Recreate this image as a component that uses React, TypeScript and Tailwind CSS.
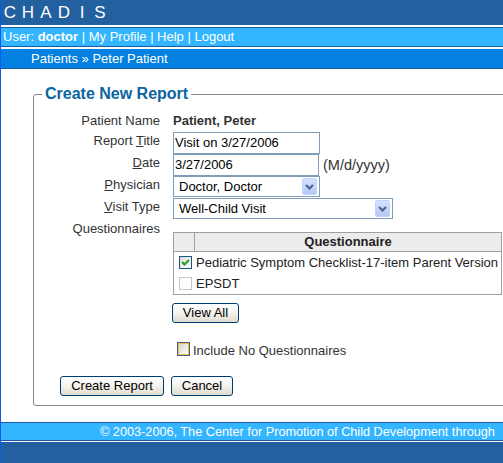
import React from "react";

function XpButton({ children, w }: { children: React.ReactNode; w: string }) {
  return (
    <div
      className={`${w} h-[20px] flex items-center justify-center rounded-[3px] border border-[#003c74] bg-linear-to-b from-[#ffffff] via-[#f4f3ee] to-[#dedbce] text-[13px] leading-4 text-black`}
    >
      {children}
    </div>
  );
}

function DropBtn() {
  return (
    <div className="mr-[2px] h-[17px] w-[15px] flex items-center justify-center rounded-[2px] border border-[#c3d3fd] bg-linear-to-b from-[#d5e2fe] to-[#b4c9f7]">
      <svg width="9" height="6" viewBox="0 0 9 6">
        <path d="M1 1 L4.5 4.5 L8 1" fill="none" stroke="#4d6185" strokeWidth="2" />
      </svg>
    </div>
  );
}

export default function App() {
  return (
    <div className="w-[503px] h-[463px] overflow-hidden bg-white border-l border-[#0b5ce6] flex flex-col font-['Liberation_Sans',Arial,sans-serif] text-[13px] leading-4 text-[#333]">
      {/* header */}
      <div className="h-[25px] shrink-0 bg-[#2360a0] flex items-center text-white text-[17px] font-normal">
        {["C", "H", "A", "D", "I", "S"].map((c) => (
          <span key={c} className="w-[18px] text-center">
            {c}
          </span>
        ))}
      </div>
      <div className="h-[2px] shrink-0" />
      <div className="h-[20px] shrink-0 bg-[#33b6ff] border-y border-[#1f5a9c] flex items-center pl-[2px] text-white whitespace-nowrap">
        User:&nbsp;<b>doctor</b>&nbsp;|&nbsp;My Profile&nbsp;|&nbsp;Help&nbsp;|&nbsp;Logout
      </div>
      <div className="h-[2px] shrink-0" />
      <div className="h-[20px] shrink-0 bg-[#0481e0] border-b border-[#1f5a9c] flex items-center pl-[30px] text-white whitespace-nowrap">
        Patients » Peter Patient
      </div>

      {/* content */}
      <fieldset className="mt-[16px] ml-[32px] w-[500px] shrink-0 border border-[#878787] rounded-[3px] pl-[8px] pt-[9px] pb-[9px]">
        <legend className="px-[3px] text-[16px] leading-[18px] font-bold text-[#0a64a0]">Create New Report</legend>
        <div className="grid grid-cols-[118px_auto] gap-x-[13px]">
          <div className="h-[20px] text-right pt-[1px]">Patient Name</div>
          <div className="h-[20px] font-bold pt-[1px]">Patient, Peter</div>

          <div className="h-[22px] text-right pt-[1px]">
            Report <span className="underline">T</span>itle
          </div>
          <div className="h-[22px]">
            <div className="w-[147px] h-[22px] border border-[#7f9db9] flex items-center pl-[1px] text-black">Visit on 3/27/2006</div>
          </div>

          <div className="h-[22px] text-right pt-[1px]">
            <span className="underline">D</span>ate
          </div>
          <div className="h-[22px] flex items-center">
            <div className="w-[146px] h-[22px] border border-[#7f9db9] flex items-center pl-[1px] text-black">3/27/2006</div>
            <span className="ml-[4px] text-[14.5px]">(M/d/yyyy)</span>
          </div>

          <div className="h-[22px] text-right pt-[1px]">
            <span className="underline">P</span>hysician
          </div>
          <div className="h-[22px]">
            <div className="w-[147px] h-[21px] border border-[#7f9db9] flex items-center pl-[5px] text-black">
              <span className="flex-1">Doctor, Doctor</span>
              <DropBtn />
            </div>
          </div>

          <div className="h-[22px] text-right pt-[1px]">
            <span className="underline">V</span>isit Type
          </div>
          <div className="h-[22px]">
            <div className="w-[220px] h-[21px] border border-[#7f9db9] flex items-center pl-[5px] text-black">
              <span className="flex-1">Well-Child Visit</span>
              <DropBtn />
            </div>
          </div>

          <div className="text-right pt-[1px]">Questionnaires</div>
          <div className="flex flex-col items-start">
            <div className="mt-[12px] w-[329px] border border-[#a0a0a0]">
              <div className="h-[19px] flex bg-[#ececec] border-b border-[#a0a0a0]">
                <div className="w-[21px] border-r border-[#a0a0a0]" />
                <div className="flex-1 flex items-center justify-center font-bold text-[#222]">Questionnaire</div>
              </div>
              <div className="h-[21px] flex items-center whitespace-nowrap">
                <div className="w-[21px] h-full pl-[5px] pt-[4px]">
                  <div className="w-[13px] h-[13px] border border-[#1c5180] bg-linear-to-br from-[#dcdcd7] to-white flex items-center justify-center">
                    <svg width="9" height="9" viewBox="0 0 9 9">
                      <path d="M1 4 L3.5 6.5 L8 2" fill="none" stroke="#21a121" strokeWidth="2" />
                    </svg>
                  </div>
                </div>
                <span className="pl-[1px] text-[#222]">Pediatric Symptom Checklist-17-item Parent Version</span>
              </div>
              <div className="h-[21px] flex items-center">
                <div className="w-[21px] h-full pl-[5px] pt-[4px]">
                  <div className="w-[13px] h-[13px] border border-[#cac8bb] bg-white" />
                </div>
                <span className="pl-[1px] text-[#222]">EPSDT</span>
              </div>
            </div>
            <div className="mt-[8px] -ml-[1px]">
              <XpButton w="w-[67px]">View All</XpButton>
            </div>
            <div className="mt-[19px] flex items-start ml-[4px]">
              <div className="w-[13px] h-[14px] border border-[#4a5f80] shadow-[inset_0_0_0_1px_#f2b95a] bg-linear-to-br from-[#d4d4ce] to-white" />
              <span className="mt-[1px] ml-[3px]">Include No Questionnaires</span>
            </div>
          </div>
        </div>
        <div className="mt-[17px] ml-[18px] flex gap-[7px]">
          <XpButton w="w-[104px]">Create Report</XpButton>
          <XpButton w="w-[62px]">Cancel</XpButton>
        </div>
      </fieldset>

      <div className="flex-1" />
      {/* footer */}
      <div className="h-[19px] shrink-0 bg-[#33b6ff] border-y border-[#1f5a9c] flex items-center pl-[99px] text-white text-[12.7px] whitespace-nowrap overflow-hidden">
        © 2003-2006, The Center for Promotion of Child Development through
      </div>
      <div className="h-[1px] shrink-0" />
      <div className="h-[21px] shrink-0 bg-[#2360a0]" />
    </div>
  );
}
